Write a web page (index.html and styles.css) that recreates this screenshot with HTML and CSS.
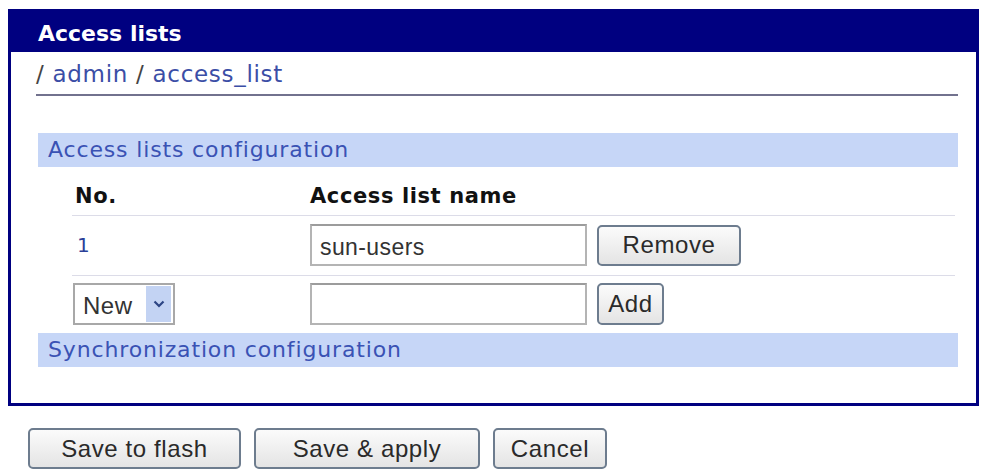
FILE: index.html
```html
<!DOCTYPE html>
<html lang="en">
<head>
  <meta charset="UTF-8">
  <title>Access lists</title>
  <link rel="stylesheet" href="styles.css">
</head>
<body>

<!-- access list panel -->
<div class="panel">
  <div class="panel-head">Access lists</div>
  <div class="panel-body">
    <div class="crumbs">/ <a href="#">admin</a> / <a href="#">access_list</a></div>

    <div class="section">Access lists configuration</div>

    <div class="acl">
      <div class="acl-row acl-head">
        <div class="col-no">No.</div>
        <div class="col-name">Access list name</div>
      </div>
      <div class="acl-row">
        <div class="col-no"><a href="#" class="num">1</a></div>
        <div class="col-name">
          <input type="text" class="field" value="sun-users">
          <button class="btn btn-remove">Remove</button>
        </div>
      </div>
      <div class="acl-row acl-new">
        <div class="col-no">
          <span class="select">
            <select><option>New</option></select>
            <span class="select-arrow">
              <svg width="12" height="8" viewBox="0 0 12 8"><path d="M1.5 1.5 L6 6 L10.5 1.5" fill="none" stroke="#2c4584" stroke-width="2.2"/></svg>
            </span>
          </span>
        </div>
        <div class="col-name">
          <input type="text" class="field" value="">
          <button class="btn btn-add">Add</button>
        </div>
      </div>
    </div>

    <div class="section">Synchronization configuration</div>
  </div>
</div>

<!-- form actions -->
<div class="actions">
  <button class="btn btn-flash">Save to flash</button>
  <button class="btn btn-apply">Save &amp; apply</button>
  <button class="btn btn-cancel">Cancel</button>
</div>

</body>
</html>
```

FILE: styles.css
```css
body{margin:9px 5px 0 8px;background:#fff;font-family:"DejaVu Sans",Verdana,sans-serif;color:#222}
a{text-decoration:none;color:#3b4ea6}

.panel{width:965px;border:3px solid #000080;border-top-width:0;background:#fff}
.panel-head{background:#000080;color:#fff;font-weight:bold;font-size:22px;height:43px;line-height:50px;padding-left:27px;box-sizing:border-box}
.panel-body{padding:0 18px 36px 27px}

.crumbs{font-size:23px;line-height:30px;letter-spacing:.7px;padding:7px 0 5px;margin-left:-2px;border-bottom:2px solid #72728e;color:#444}

.section{margin-top:37px;height:34px;line-height:34px;background:#c6d6f7;color:#3a52b4;font-size:22px;letter-spacing:.85px;padding-left:10px}
.acl + .section{margin-top:0}

.acl{margin:0 3px 0 34px}
.acl-row{display:grid;grid-template-columns:238px 1fr;align-items:center;border-bottom:1px solid #dcdce8}
.acl-head{padding:17px 0 6px;font-weight:bold;font-size:21px;line-height:25px;letter-spacing:.6px;color:#111}
.acl-head .col-no{padding-left:3px}
.acl-row:not(.acl-head){padding:8px 0 9px}
.acl-new{border-bottom:none}
.acl-row.acl-new{padding:7px 0 8px}
.col-name{display:flex;align-items:center;gap:10px}
.num{font-size:20px;padding-left:5px;color:#2b3f98}

.field{width:277px;height:42px;box-sizing:border-box;border:2px solid #b4b4b4;border-top-color:#9c9c9c;font-family:"Liberation Sans",Arial,sans-serif;font-size:23px;letter-spacing:.4px;padding:4px 8px 0;color:#333;margin:0}

.select{position:relative;display:inline-block;width:102px;height:42px;margin-left:1px}
.select select{appearance:none;-webkit-appearance:none;width:100%;height:100%;border:2px solid #a8a8a8;background:#fff;font-family:"Liberation Sans",Arial,sans-serif;font-size:24px;letter-spacing:.5px;padding:2px 0 0 8px;color:#333;margin:0}
.select-arrow{position:absolute;top:3px;right:4px;width:25px;height:36px;background:#c3d3f3;display:flex;align-items:center;justify-content:center;pointer-events:none}

.btn{height:41px;box-sizing:border-box;border:2px solid #6d7c8e;border-radius:5px;background:linear-gradient(#fbfbfb,#e4e4e4);font-family:"Liberation Sans",Arial,sans-serif;font-size:24px;letter-spacing:.6px;color:#2a2a2a;padding:0;margin:0;cursor:pointer}
.btn-remove{width:144px}
.btn-add{width:67px;height:42px}

.actions{display:flex;gap:13px;margin-top:22px;padding-left:20px}
.btn-flash{width:213px}
.btn-apply{width:226px}
.btn-cancel{width:114px}
```
